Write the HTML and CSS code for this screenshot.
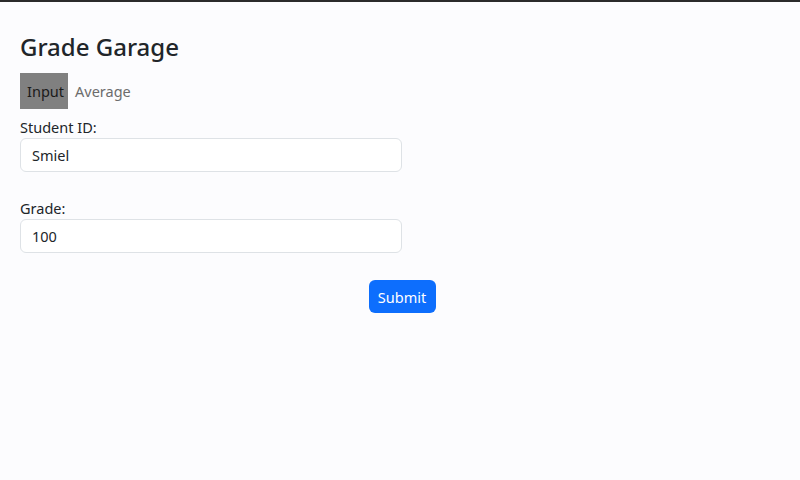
FILE: index.html
```html
<!DOCTYPE html>
<html>
<head>
<meta charset="utf-8">
<link rel="stylesheet" href="styles.css">
</head>
<body>
<div class="topline"></div>
<main class="page">
  <h1 class="title">Grade Garage</h1>
  <nav class="tabs">
    <span class="tab active">Input</span>
    <span class="tab">Average</span>
  </nav>
  <form class="form">
    <div class="field">
      <label class="label">Student ID:</label>
      <input class="input" type="text" value="Smiel">
    </div>
    <div class="field">
      <label class="label">Grade:</label>
      <input class="input" type="text" value="100">
    </div>
    <div class="actions">
      <button class="btn" type="button">Submit</button>
    </div>
  </form>
</main>
</body>
</html>
```
FILE: styles.css
```css
html, body {
  margin: 0;
  padding: 0;
  background: #fcfcfe;
  font-family: "Noto Sans", "Open Sans", sans-serif;
  color: #212529;
}
.topline {
  height: 2px;
  background: #2b2b2b;
}
.page {
  padding: 0 20px;
}
.title {
  font-size: 24px;
  font-weight: 500;
  margin: 29px 0 0;
  line-height: 32px;
}
.tabs {
  display: flex;
  align-items: center;
  margin-top: 10px;
}
.tab {
  font-size: 14.5px;
  line-height: 36px;
  padding: 0 7px;
  color: #6c6c6c;
}
.tab.active {
  background: #808080;
  color: #1a1a1a;
  width: 48px;
  box-sizing: border-box;
}
.form {
  margin-top: 7px;
}
.field {
  width: 382px;
  margin-bottom: 25px;
}
.label {
  display: block;
  font-size: 14.5px;
  line-height: 22px;
}
.input {
  display: block;
  box-sizing: border-box;
  width: 382px;
  height: 34px;
  border: 1px solid #dee2e6;
  border-radius: 6px;
  background: #fff;
  padding: 0 11px;
  font: inherit;
  font-size: 14.5px;
  color: #212529;
}
.actions {
  display: flex;
  justify-content: center;
  margin-top: 27px;
  padding-left: 4px;
}
.btn {
  background: #0d6efd;
  color: #fff;
  border: none;
  border-radius: 6px;
  height: 33px;
  width: 67px;
  font: inherit;
  font-size: 14.5px;
}
```
